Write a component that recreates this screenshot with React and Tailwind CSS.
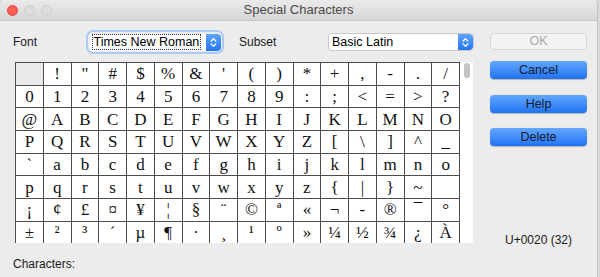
import React from "react";

const rows = [
  [" ", "!", '"', "#", "$", "%", "&", "'", "(", ")", "*", "+", ",", "-", ".", "/"],
  ["0", "1", "2", "3", "4", "5", "6", "7", "8", "9", ":", ";", "<", "=", ">", "?"],
  ["@", "A", "B", "C", "D", "E", "F", "G", "H", "I", "J", "K", "L", "M", "N", "O"],
  ["P", "Q", "R", "S", "T", "U", "V", "W", "X", "Y", "Z", "[", "\\", "]", "^", "_"],
  ["`", "a", "b", "c", "d", "e", "f", "g", "h", "i", "j", "k", "l", "m", "n", "o"],
  ["p", "q", "r", "s", "t", "u", "v", "w", "x", "y", "z", "{", "|", "}", "~", " "],
  ["¡", "¢", "£", "¤", "¥", "¦", "§", "¨", "©", "ª", "«", "¬", "-", "®", "¯", "°"],
  ["±", "²", "³", "´", "µ", "¶", "·", "¸", "¹", "º", "»", "¼", "½", "¾", "¿", "À"],
];

function Stepper({ className }) {
  return (
    <div className={`flex h-full w-[15px] items-center justify-center rounded-r-[4px] bg-gradient-to-b from-[#5da4fb] to-[#2275f5] ${className || ""}`}>
      <svg width="7" height="11" viewBox="0 0 7 11" fill="none" stroke="white" strokeWidth="1.3" strokeLinecap="round" strokeLinejoin="round">
        <path d="M1.2 4 L3.5 1.6 L5.8 4" />
        <path d="M1.2 7 L3.5 9.4 L5.8 7" />
      </svg>
    </div>
  );
}

function BlueButton({ children, className }) {
  return (
    <div className={`flex h-[18px] w-[97px] items-center justify-center rounded-[4px] bg-gradient-to-b from-[#62a7fb] to-[#1f72f5] text-[12.5px] text-[#141a2e] shadow-[0_0.5px_1px_rgba(0,0,0,0.25)] ${className || ""}`}>
      {children}
    </div>
  );
}

export default function App() {
  return (
    <div className="h-[277px] w-[600px] overflow-hidden bg-[#d9d9d9]" style={{ fontFamily: '"Liberation Sans", Arial, sans-serif' }}>
      <div className="flex h-[277px] w-[598px] flex-col overflow-hidden rounded-t-[5px] border-r border-[#c4c4c4] bg-[#ececec]">
        {/* Title bar */}
        <div className="relative flex h-[21px] shrink-0 items-center justify-center border-b border-[#c6c6c6] bg-gradient-to-b from-[#ebebeb] to-[#d6d6d6]">
          <div className="absolute left-[7px] top-[5px] flex gap-[6px]">
            <div className="h-[11px] w-[11px] rounded-full border border-[#e0443e] bg-[#fd5f57]" />
            <div className="h-[11px] w-[11px] rounded-full border border-[#cdcdcd] bg-[#dddddd]" />
            <div className="h-[11px] w-[11px] rounded-full border border-[#cdcdcd] bg-[#dddddd]" />
          </div>
          <span className="text-[13px] text-[#4a4a4a]">Special Characters</span>
        </div>

        <div className="flex flex-1">
          {/* Left column */}
          <div className="flex w-[475px] flex-col pl-[13px] pt-[11px]">
            <div className="flex h-[20px] items-center">
              <span className="w-[75px] text-[12px] text-[#1a1a1a]">Font</span>
              <div className="flex h-[20px] w-[134px] items-center rounded-[5px] p-[1.5px] shadow-[0_0_0_2px_#a9cbf5]">
                <div className="flex h-full flex-1 items-center rounded-l-[3px] bg-white pl-[2px]">
                  <span className="border border-dotted border-[#333] px-[1px] text-[12.5px] leading-[14px] text-black">Times New Roman</span>
                </div>
                <Stepper />
              </div>
              <span className="ml-[17px] w-[89px] text-[12px] text-[#1a1a1a]">Subset</span>
              <div className="flex h-[18px] w-[146px] items-center overflow-hidden rounded-[4px] border border-[#c8c8c8] bg-white">
                <span className="flex-1 pl-[3px] text-[12.5px] text-black">Basic Latin</span>
                <Stepper />
              </div>
            </div>

            {/* Character grid */}
            <div className="ml-[2px] mt-[10px] flex h-[181px] w-[458px] overflow-hidden bg-white">
              <div className="w-[445px] border-l border-t border-[#4d4d4d]" style={{ fontFamily: '"Liberation Serif", "Times New Roman", serif' }}>
                {rows.map((row, ri) => (
                  <div key={ri} className="grid h-[22.7px] grid-cols-[repeat(16,minmax(0,1fr))]">
                    {row.map((ch, ci) => (
                      <div
                        key={ci}
                        className={`flex items-center justify-center border-b border-r border-[#4d4d4d] text-[17px] leading-none text-[#111] ${ri === 0 && ci === 0 ? "bg-[#e9e9e9]" : ""}`}
                      >
                        {ch}
                      </div>
                    ))}
                  </div>
                ))}
              </div>
              <div className="flex-1 pl-[4px] pt-[1px]">
                <div className="h-[15px] w-[6px] rounded-full bg-[#c4c4c4]" />
              </div>
            </div>

            <div className="mt-[12px] text-[12px] text-[#1a1a1a]">Characters:</div>
          </div>

          {/* Right column */}
          <div className="ml-[15px] flex flex-col pt-[12px]">
            <div className="flex h-[17px] w-[97px] items-center justify-center rounded-[4px] border border-[#d6d6d6] bg-[#f3f3f3] text-[12.5px] text-[#a9a9a9]">
              OK
            </div>
            <BlueButton className="mt-[11px]">Cancel</BlueButton>
            <BlueButton className="mt-[16px]">Help</BlueButton>
            <BlueButton className="mt-[15px]">Delete</BlueButton>
            <div className="mt-[85px] pl-[15px] text-[12px] text-[#1a1a1a]">U+0020 (32)</div>
          </div>
        </div>
      </div>
    </div>
  );
}
